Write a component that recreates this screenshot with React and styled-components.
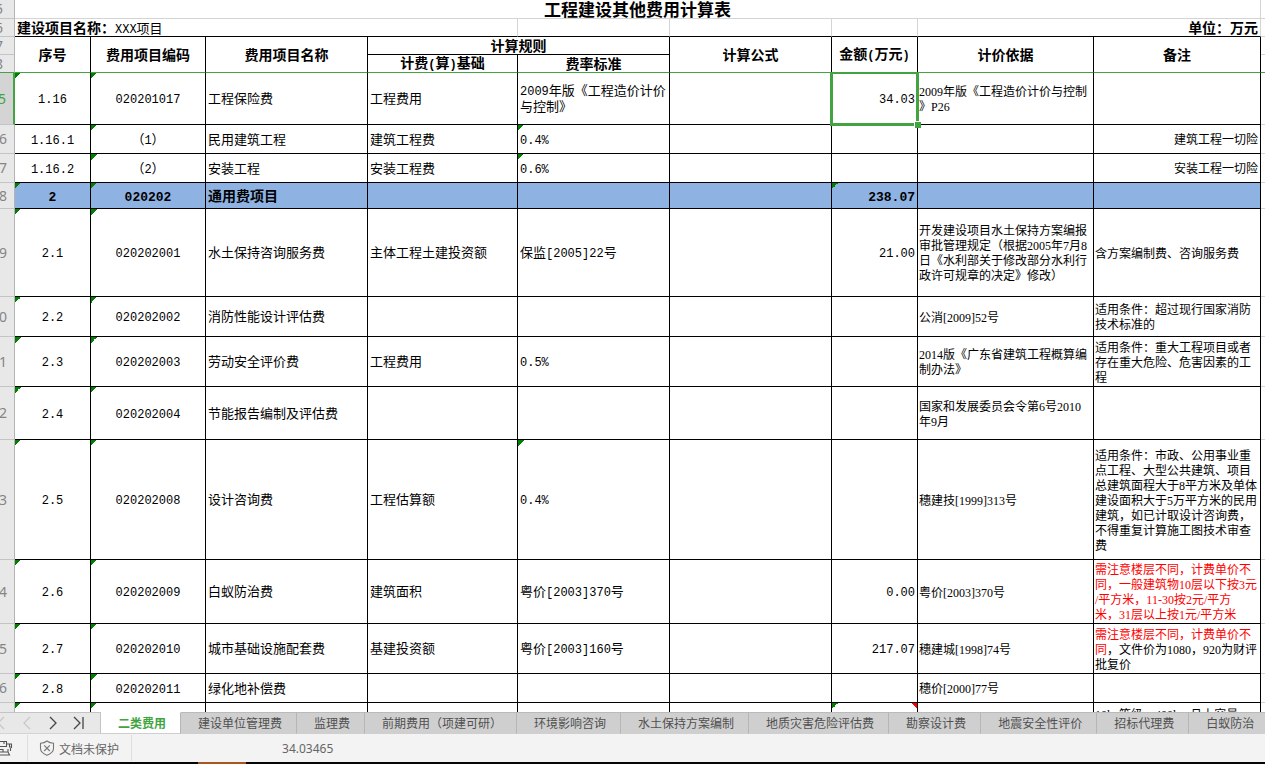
import React, { Fragment, useState } from "react";
import styled, { createGlobalStyle } from "styled-components";

const COLUMNS = [15, 76, 115, 162, 150, 152, 162, 86, 176, 167];

const ROWS = [
  { n: "5", h: 52, active: true, no: "1.16", code: "020201017", name: "工程保险费", base: "工程费用", rate: "2009年版《工程造价计价\n与控制》", amount: "34.03", basis: "2009年版《工程造价计价与控制\n》P26", marks: ["no", "code"] },
  { n: "6", h: 29, no: "1.16.1", code: "（1）", name: "民用建筑工程", base: "建筑工程费", rate: "0.4%", note: "建筑工程一切险", noteAlign: "right", marks: ["code", "rate"] },
  { n: "7", h: 29, no: "1.16.2", code: "（2）", name: "安装工程", base: "安装工程费", rate: "0.6%", note: "安装工程一切险", noteAlign: "right", marks: ["code", "rate"] },
  { n: "8", h: 26, group: true, no: "2", code: "020202", name: "通用费项目", amount: "238.07", marks: ["no", "code", "amount"] },
  { n: "9", h: 88, no: "2.1", code: "020202001", name: "水土保持咨询服务费", base: "主体工程土建投资额", rate: "保监[2005]22号", amount: "21.00", basis: "开发建设项目水土保持方案编报\n审批管理规定（根据2005年7月8\n日《水利部关于修改部分水利行\n政许可规章的决定》修改）", note: "含方案编制费、咨询服务费", marks: ["no", "code"] },
  { n: "0", h: 40, no: "2.2", code: "020202002", name: "消防性能设计评估费", basis: "公消[2009]52号", note: "适用条件：超过现行国家消防\n技术标准的", marks: ["no", "code"] },
  { n: "1", h: 50, no: "2.3", code: "020202003", name: "劳动安全评价费", base: "工程费用", rate: "0.5%", basis: "2014版《广东省建筑工程概算编\n制办法》", note: "适用条件：重大工程项目或者\n存在重大危险、危害因素的工\n程", marks: ["no", "code"] },
  { n: "2", h: 53, no: "2.4", code: "020202004", name: "节能报告编制及评估费", basis: "国家和发展委员会令第6号2010\n年9月", marks: ["no", "code"] },
  { n: "3", h: 120, no: "2.5", code: "020202008", name: "设计咨询费", base: "工程估算额", rate: "0.4%", basis: "穗建技[1999]313号", note: "适用条件：市政、公用事业重\n点工程、大型公共建筑、项目\n总建筑面程大于8平方米及单体\n建设面积大于5万平方米的民用\n建筑，如已计取设计咨询费，\n不得重复计算施工图技术审查\n费", marks: ["no", "code", "rate"] },
  { n: "4", h: 64, no: "2.6", code: "020202009", name: "白蚁防治费", base: "建筑面积", rate: "粤价[2003]370号", amount: "0.00", basis: "粤价[2003]370号", warning: "需注意楼层不同，计费单价不\n同，一般建筑物10层以下按3元\n/平方米，11-30按2元/平方\n米，31层以上按1元/平方米", marks: ["no", "code"] },
  { n: "5", h: 50, no: "2.7", code: "020202010", name: "城市基础设施配套费", base: "基建投资额", rate: "粤价[2003]160号", amount: "217.07", basis: "穗建城[1998]74号", warning: "需注意楼层不同，计费单价不\n同", note: "，文件价为1080，920为财评\n批复价", marks: ["no", "code"] },
  { n: "6", h: 29, no: "2.8", code: "020202011", name: "绿化地补偿费", basis: "穗价[2000]77号", marks: ["no", "code"] },
  { n: "", h: 22, note: "10kv等级、400kva且上容量", marks: ["no", "code", "amount"], comment: true },
];

const TABS = [
  "二类费用",
  "建设单位管理费",
  "监理费",
  "前期费用（项建可研）",
  "环境影响咨询",
  "水土保持方案编制",
  "地质灾害危险评估费",
  "勘察设计费",
  "地震安全性评价",
  "招标代理费",
  "白蚁防治",
];

const NAV = [
  { label: "第一张工作表", path: "M12 3 L6 9 L12 15", disabled: true },
  { label: "上一张工作表", path: "M12 3 L6 9 L12 15", disabled: true },
  { label: "下一张工作表", path: "M6 3 L12 9 L6 15" },
  { label: "最后一张工作表", path: "M4 3 L10 9 L4 15 M13 3 V15" },
];

// Half-width runs are set in the monospaced face, the rest stays in the CJK face
const Mixed = ({ text = "", bold }) =>
  text.split(/([\x21-\x7e]+)/).map((part, i) =>
    i % 2 ? <Latin key={i} $bold={bold}>{part}</Latin> : <Fragment key={i}>{part}</Fragment>
  );

const DataRow = ({ row }) => {
  const mark = (key) => row.marks.includes(key);
  const text = (value) => <Mixed text={value} bold={row.group} />;

  return (
    <Row $h={row.h} $group={row.group}>
      <RowHead scope="row" $active={row.active}><RowNumber>{row.n}</RowNumber></RowHead>
      <Cell $align="center" $mark={mark("no")}>{text(row.no)}</Cell>
      <Cell $align="center" $mark={mark("code")}>{text(row.code)}</Cell>
      <Cell>{text(row.name)}</Cell>
      <Cell>{text(row.base)}</Cell>
      <Cell $mark={mark("rate")}>{text(row.rate)}</Cell>
      <Cell />
      <AmountCell $align="right" $mark={mark("amount")}>
        {text(row.amount)}
        {row.active && <Selection />}
        {row.comment && <CommentMark />}
      </AmountCell>
      <SmallCell>{row.basis}</SmallCell>
      <SmallCell $align={row.noteAlign}>
        {row.warning && <Warning>{row.warning}</Warning>}
        {row.note}
      </SmallCell>
      <Filler />
    </Row>
  );
};

const Sheet = () => (
  <SheetArea>
    <Table>
      <colgroup>
        {COLUMNS.map((width, i) => <Col key={i} $w={width} />)}
        <col />
      </colgroup>
      <thead>
        <Row $h={19}>
          <RowHead $clipped><RowNumber>5</RowNumber></RowHead>
          <TitleCell colSpan={9}>工程建设其他费用计算表</TitleCell>
          <Filler />
        </Row>
        <Row $h={18}>
          <RowHead $clipped><RowNumber>6</RowNumber></RowHead>
          <InfoCell colSpan={4}><b>建设项目名称：</b><Mixed text="XXX项目" /></InfoCell>
          <InfoCell />
          <InfoCell />
          <InfoCell />
          <InfoCell colSpan={2} $align="right"><b>单位：万元</b></InfoCell>
          <Filler />
        </Row>
        <Row $h={18}>
          <RowHead $clipped><RowNumber>7</RowNumber></RowHead>
          <HeadCell rowSpan={2} $frozen>序号</HeadCell>
          <HeadCell rowSpan={2} $frozen>费用项目编码</HeadCell>
          <HeadCell rowSpan={2} $frozen>费用项目名称</HeadCell>
          <HeadCell colSpan={2}>计算规则</HeadCell>
          <HeadCell rowSpan={2} $frozen>计算公式</HeadCell>
          <HeadCell rowSpan={2} $frozen><Mixed text="金额(万元)" /></HeadCell>
          <HeadCell rowSpan={2} $frozen>计价依据</HeadCell>
          <HeadCell rowSpan={2} $frozen>备注</HeadCell>
          <Filler />
        </Row>
        <Row $h={18}>
          <RowHead $clipped $frozen><RowNumber>8</RowNumber></RowHead>
          <HeadCell $frozen><Mixed text="计费(算)基础" /></HeadCell>
          <HeadCell $frozen>费率标准</HeadCell>
          <Filler $frozen />
        </Row>
      </thead>
      <tbody>
        {ROWS.map((row, i) => <DataRow key={i} row={row} />)}
      </tbody>
    </Table>
  </SheetArea>
);

const TabBar = () => {
  const [current, setCurrent] = useState(0);
  return (
    <Bar>
      <NavGroup>
        {NAV.map((item) => (
          <NavButton key={item.label} aria-label={item.label} disabled={item.disabled}>
            <svg width="18" height="18" viewBox="0 0 18 18" fill="none" stroke="currentColor" strokeWidth="1.3">
              <path d={item.path} />
            </svg>
          </NavButton>
        ))}
      </NavGroup>
      {TABS.map((tab, i) => (
        <Tab key={tab} $active={i === current} onClick={() => setCurrent(i)}>{tab}</Tab>
      ))}
    </Bar>
  );
};

const StatusBar = () => (
  <Status>
    <MacroButton aria-label="宏">
      <svg width="13" height="18" viewBox="0 0 13 18" fill="none" stroke="#555" strokeWidth="1.1">
        <path d="M0 2.5H6.5V7.5H0M4 2.5V5M6.5 5H11.5V9M9.5 4.5V8H11.5V5M10.5 9V12M0 10.5H3V12.5M0 13H8L9.5 16H0M8 13V10" />
      </svg>
    </MacroButton>
    <ProtectButton>
      <svg width="16" height="16" viewBox="0 0 16 16" fill="none" stroke="#777" strokeWidth="1.1">
        <path d="M8 1C6 2.6 3.8 3.2 1.5 3.3V8.4C1.5 11.6 4.2 13.6 8 15.2C11.8 13.6 14.5 11.6 14.5 8.4V3.3C12.2 3.2 10 2.6 8 1Z" />
        <path d="M5.2 5.4L10.8 11M10.8 5.4L5.2 11" />
      </svg>
      文档未保护
    </ProtectButton>
    <CellValue>34.03465</CellValue>
  </Status>
);

const App = () => (
  <Page>
    <GlobalStyle />
    <Sheet />
    <TabBar />
    <StatusBar />
    <Taskbar><TaskHighlight /></Taskbar>
  </Page>
);

const GlobalStyle = createGlobalStyle`
  * {
    box-sizing: border-box;
  }
  body {
    margin: 0;
    overflow: hidden;
    text-spacing-trim: space-all;
  }
  button {
    margin: 0;
    padding: 0;
    border: 0;
    background: none;
    font: inherit;
    color: inherit;
  }
`;

const Page = styled.div`
  display: flex;
  flex-direction: column;
  height: 100vh;
  background: #fff;
  color: #000;
  font-family: "Noto Sans CJK SC", sans-serif;
`;

const SheetArea = styled.main`
  flex: 1;
  min-height: 0;
  overflow: hidden;
`;

const Table = styled.table`
  width: 100%;
  table-layout: fixed;
  border-collapse: separate;
  border-spacing: 0;
  font-size: 13px;
  line-height: 16px;
`;

const Col = styled.col`
  width: ${(p) => p.$w}px;
`;

const Row = styled.tr`
  height: ${(p) => p.$h}px;
  background: ${(p) => (p.$group ? "#8eb2e2" : "#fff")};
  font-size: ${(p) => (p.$group ? 14 : 13)}px;
  font-weight: ${(p) => (p.$group ? 700 : 400)};
`;

const RowHead = styled.th`
  padding: 0 ${(p) => (p.$clipped ? 11 : 7)}px 0 0;
  overflow: hidden;
  border-right: ${(p) => (p.$active ? "2px solid #41a441" : "1px solid #b4b4b4")};
  border-bottom: 1px solid ${(p) => (p.$frozen ? "#41a441" : "#c4c4c4")};
  background: ${(p) => (p.$active ? "#d4d4d4" : "#e8e8e8")};
  color: ${(p) => (p.$active ? "#41a441" : "#858585")};
  font-family: "Noto Sans", sans-serif;
  font-size: 14px;
  font-weight: 400;
`;

const RowNumber = styled.span`
  display: flex;
  justify-content: flex-end;
`;

const Cell = styled.td`
  padding: 0 2px 1px;
  border-right: 1px solid #000;
  border-bottom: 1px solid #000;
  text-align: ${(p) => p.$align || "left"};
  vertical-align: middle;
  white-space: pre;
  background: ${(p) => (p.$mark ? "linear-gradient(135deg, #008000 50%, transparent 50%) 0 0 / 6px 6px no-repeat" : "none")};
`;

const AmountCell = styled(Cell)`
  position: relative;
`;

const SmallCell = styled(Cell)`
  padding: 3px 2px 0 1px;
  font-family: "Liberation Serif", "Noto Sans CJK SC", serif;
  font-size: 12px;
  line-height: 15px;
`;

const TitleCell = styled.th`
  padding: 0;
  border-right: 1px solid #d4d4d4;
  border-bottom: 1px solid #d4d4d4;
  font-size: 17px;
  line-height: 18px;
  font-weight: 700;
`;

const InfoCell = styled.td`
  padding: 0 2px;
  border-right: 1px solid #d4d4d4;
  border-bottom: 1px solid #000;
  text-align: ${(p) => p.$align || "left"};
  white-space: pre;

  b {
    font-size: 14px;
  }
`;

const HeadCell = styled.th`
  padding: 0 0 1px;
  border-right: 1px solid #000;
  border-bottom: 1px solid ${(p) => (p.$frozen ? "#41a441" : "#000")};
  font-size: 14px;
  font-weight: 700;
  line-height: 14px;
  white-space: nowrap;
`;

const Filler = styled.td`
  padding: 0;
  border-bottom: 1px solid ${(p) => (p.$frozen ? "#41a441" : "#d4d4d4")};
  background: #fff;
`;

const Latin = styled.span`
  font-family: "Liberation Mono", monospace;
  font-size: ${(p) => (p.$bold ? 13 : 12)}px;
  line-height: 1;
`;

const Warning = styled.span`
  color: #f00;
`;

const Selection = styled.span`
  position: absolute;
  inset: -1px -2px -2px -2px;
  z-index: 1;
  border: 3px solid #41a441;
  border-top-width: 2px;

  &::after {
    content: "";
    position: absolute;
    right: -5px;
    bottom: -5px;
    width: 6px;
    height: 6px;
    border-top: 1px solid #fff;
    border-left: 1px solid #fff;
    background: #41a441;
  }
`;

const CommentMark = styled.span`
  position: absolute;
  top: 0;
  right: 0;
  width: 6px;
  height: 6px;
  background: linear-gradient(225deg, #f00 50%, transparent 50%);
`;

const Bar = styled.nav`
  display: flex;
  flex: none;
  height: 22px;
  overflow: hidden;
  background: #cfcfcf;
  font-size: 12px;
`;

const NavGroup = styled.div`
  display: flex;
  flex: none;
  justify-content: flex-end;
  width: 101px;
  padding-right: 8px;
  overflow: hidden;
  border-top: 1px solid #c4c4c4;
  border-right: 1px solid #c4c4c4;
  border-bottom: 1px solid #d4d4d4;
  background: #e8e8e8;
`;

const NavButton = styled.button`
  display: flex;
  flex: none;
  align-items: center;
  justify-content: center;
  width: 26px;
  color: ${(p) => (p.disabled ? "#c8c8c8" : "#444")};
`;

const Tab = styled.button`
  flex: none;
  padding: 0 14px 0 17px;
  border-top: 1px solid ${(p) => (p.$active ? "#fff" : "#bababa")};
  border-right: 1px solid #b6b6b6;
  border-bottom: 1px solid #cfcfcf;
  background: ${(p) => (p.$active ? "#fff" : "#cfcfcf")};
  color: ${(p) => (p.$active ? "#41a441" : "#505050")};
  font-weight: ${(p) => (p.$active ? 700 : 400)};
  line-height: 20px;
  white-space: nowrap;
`;

const Status = styled.footer`
  display: flex;
  flex: none;
  align-items: center;
  height: 28px;
  background: #f3f3f3;
  color: #666;
  font-size: 12px;
`;

const MacroButton = styled.button`
  display: flex;
  flex: none;
  align-items: center;
  width: 28px;
  height: 26px;
  border-right: 1px solid #dedede;
`;

const ProtectButton = styled.button`
  display: flex;
  align-items: center;
  gap: 4px;
  height: 26px;
  padding: 0 12px 0 11px;
  border-right: 1px solid #dedede;
`;

const CellValue = styled.span`
  padding-left: 150px;
  font-family: "Noto Sans", sans-serif;
`;

const Taskbar = styled.div`
  flex: none;
  height: 2px;
  padding-left: 198px;
  background: #060406;
`;

const TaskHighlight = styled.div`
  width: 48px;
  height: 2px;
  background: #a8561f;
`;

export default App;
